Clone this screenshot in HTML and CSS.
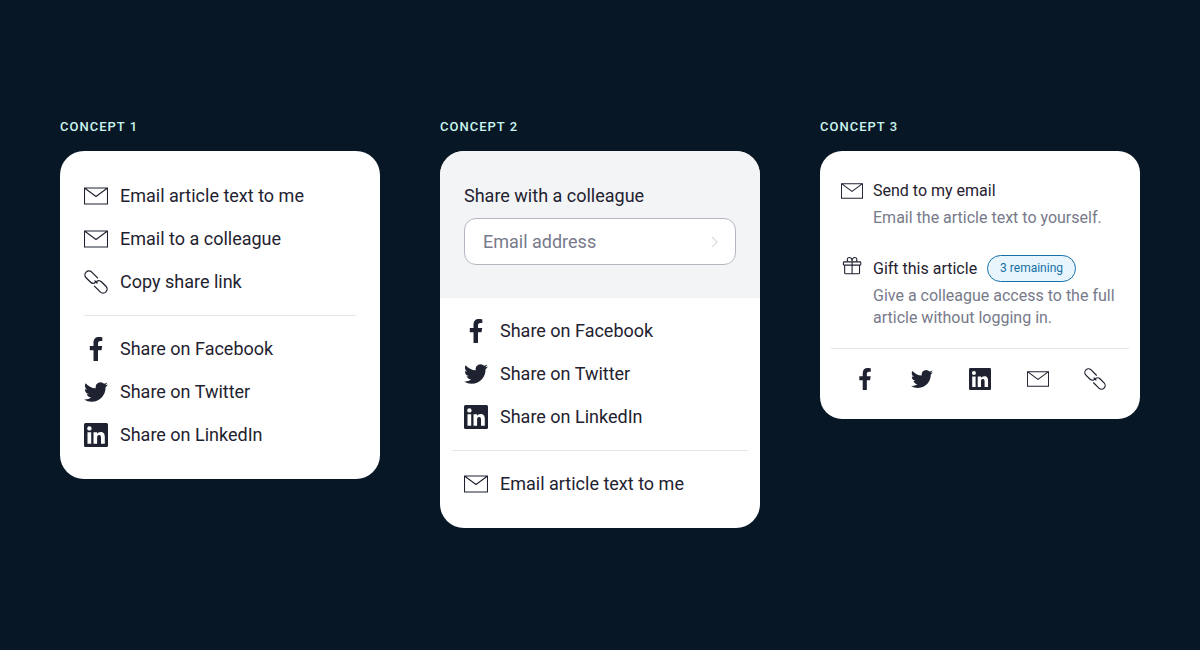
FILE: index.html
```html
<!DOCTYPE html>
<html lang="en">
  <head>
    <meta charset="UTF-8" />
    <meta name="viewport" content="width=device-width, initial-scale=1.0" />
    <title>Share menu concepts</title>
    <link rel="stylesheet" href="styles.css">
  </head>
  <body>
    <!-- Shared icons -->
    <svg class="sprite" aria-hidden="true">
      <symbol id="mail" viewBox="0 0 24 24">
        <path d="M.5 4h23v16H.5zM.5 4L12 12.500 23.500 4" fill="none" stroke="currentColor" stroke-width="1.100" />
      </symbol>
      <symbol id="link" viewBox="0 0 24 24">
        <g transform="translate(12 12) rotate(45)" fill="none" stroke="currentColor" stroke-width="1.300" stroke-linecap="round">
          <path d="M-1.800-4H-10a4 4 0 0 0 0 8H-4A4 4 0 0 0 0 .8" />
          <path d="M1.800 4H10a4 4 0 0 0 0-8H4A4 4 0 0 0 0-.8" />
          <path d="M-1.500 0H1.500" />
        </g>
      </symbol>
      <symbol id="facebook" viewBox="0 0 24 24">
        <path d="M9.500 24V13.300H5.800V9.100h3.700V5.700C9.500 2 11.600 0 15 0c1.600 0 3.300.3 3.300.3v3.700h-1.900c-1.800 0-2.400 1.100-2.400 2.300v2.800h4.200l-.7 4.200H14V24z" fill="currentColor" />
      </symbol>
      <symbol id="twitter" viewBox="0 0 24 24">
        <path d="M23.950 4.570a10 10 0 0 1-2.820.770 4.960 4.960 0 0 0 2.160-2.720c-.950.560-2 .960-3.130 1.180a4.920 4.920 0 0 0-8.380 4.480C7.690 8.090 4.070 6.130 1.640 3.160a4.900 4.900 0 0 0 1.520 6.570 4.900 4.900 0 0 1-2.230-.620v.060a4.920 4.920 0 0 0 3.950 4.830 5 5 0 0 1-2.210.080 4.940 4.940 0 0 0 4.600 3.420A9.870 9.870 0 0 1 0 19.540a14 14 0 0 0 7.550 2.210c9.050 0 14-7.500 14-13.980 0-.210 0-.420-.020-.630a9.940 9.940 0 0 0 2.420-2.570z" fill="currentColor" />
      </symbol>
      <symbol id="linkedin" viewBox="0 0 24 24">
        <rect width="24" height="24" rx="1.500" fill="currentColor" />
        <circle cx="5.400" cy="5.400" r="2.200" fill="#fff" />
        <path d="M3.500 9.200h3.700v11.500H3.500zM9.500 9.200h3.600v1.600c.6-1.100 1.900-1.900 3.600-1.900 3.400 0 4.100 2.300 4.100 5.300v6.500H17v-5.700c0-1.500-.1-3-1.900-3s-2 1.400-2 2.900v5.800H9.500z" fill="#fff" />
      </symbol>
      <symbol id="gift" viewBox="0 0 24 24">
        <g fill="none" stroke="currentColor" stroke-width="1.200" stroke-linejoin="round">
          <rect x="2.600" y="7.500" width="19" height="3.500" rx="1" />
          <path d="M4 11v8.500a1 1 0 0 0 1 1h14.200a1 1 0 0 0 1-1V11M12.100 7.500v13" />
          <path d="M12.100 7C12.100 4 10.800 2.800 9 2.800 6.600 2.800 6.200 5.500 7.800 7.300M12.100 7C12.100 4 13.400 2.800 15.200 2.800 17.600 2.800 18 5.500 16.400 7.300" />
        </g>
      </symbol>
    </svg>

    <main class="concepts">
      <section class="concept">
        <h2>Concept 1</h2>
        <div class="card">
          <div class="list">
            <button class="item"><svg class="icon"><use href="#mail" /></svg>Email article text to me</button>
            <button class="item"><svg class="icon"><use href="#mail" /></svg>Email to a colleague</button>
            <button class="item"><svg class="icon"><use href="#link" /></svg>Copy share link</button>
          </div>
          <hr class="rule" />
          <div class="list">
            <a class="item" href="#"><svg class="icon"><use href="#facebook" /></svg>Share on Facebook</a>
            <a class="item" href="#"><svg class="icon"><use href="#twitter" /></svg>Share on Twitter</a>
            <a class="item" href="#"><svg class="icon"><use href="#linkedin" /></svg>Share on LinkedIn</a>
          </div>
        </div>
      </section>

      <section class="concept">
        <h2>Concept 2</h2>
        <div class="card">
          <form class="colleague">
            <label for="email">Share with a colleague</label>
            <div class="field">
              <input id="email" type="email" placeholder="Email address" />
              <button class="send" type="submit" aria-label="Send">
                <svg viewBox="0 0 8 12"><path d="M1 1l5 5-5 5" fill="none" stroke="currentColor" stroke-width="1.300" /></svg>
              </button>
            </div>
          </form>
          <div class="list">
            <a class="item" href="#"><svg class="icon"><use href="#facebook" /></svg>Share on Facebook</a>
            <a class="item" href="#"><svg class="icon"><use href="#twitter" /></svg>Share on Twitter</a>
            <a class="item" href="#"><svg class="icon"><use href="#linkedin" /></svg>Share on LinkedIn</a>
          </div>
          <hr class="rule wide" />
          <div class="list">
            <button class="item"><svg class="icon"><use href="#mail" /></svg>Email article text to me</button>
          </div>
        </div>
      </section>

      <section class="concept">
        <h2>Concept 3</h2>
        <div class="card compact">
          <button class="action">
            <svg class="icon centered"><use href="#mail" /></svg>
            <span class="title">Send to my email</span>
            <span class="description">Email the article text to yourself.</span>
          </button>
          <button class="action">
            <svg class="icon"><use href="#gift" /></svg>
            <span class="title">Gift this article <span class="badge">3 remaining</span></span>
            <span class="description">Give a colleague access to the full article without logging in.</span>
          </button>
          <hr class="rule wide" />
          <div class="icons">
            <a href="#" aria-label="Facebook"><svg class="icon"><use href="#facebook" /></svg></a>
            <a href="#" aria-label="Twitter"><svg class="icon"><use href="#twitter" /></svg></a>
            <a href="#" aria-label="LinkedIn"><svg class="icon"><use href="#linkedin" /></svg></a>
            <a href="#" aria-label="Email"><svg class="icon"><use href="#mail" /></svg></a>
            <a href="#" aria-label="Copy link"><svg class="icon"><use href="#link" /></svg></a>
          </div>
        </div>
      </section>
    </main>
  </body>
</html>
```
FILE: styles.css
```css
* {
  box-sizing: border-box;
}

body {
  margin: 0;
  background: #081726;
  color: #1f2230;
  font-family: Roboto, sans-serif;
  font-size: 18px;
  line-height: 24px;
}

button,
input {
  font: inherit;
  color: inherit;
  border: 0;
  padding: 0;
  background: none;
  text-align: left;
}

a {
  color: inherit;
  text-decoration: none;
}

.sprite {
  display: none;
}

.concepts {
  display: grid;
  grid-template-columns: repeat(3, 1fr);
  gap: 60px;
  align-items: start;
  padding: 119px 60px 60px;
}

h2 {
  margin: 0 0 16px;
  color: #c9f5ee;
  font-size: 13px;
  font-weight: 500;
  line-height: 16px;
  letter-spacing: 1px;
  text-transform: uppercase;
}

.card {
  overflow: hidden;
  padding: 33px 0 32px;
  border-radius: 24px;
  background: #fff;
}

.list {
  display: flex;
  flex-direction: column;
  gap: 19px;
  padding: 0 24px;
}

.item {
  display: flex;
  align-items: center;
  gap: 12px;
}

.icon {
  flex: none;
  display: block;
  width: 24px;
  height: 24px;
}

.rule {
  height: 1px;
  margin: 21px 24px;
  border: 0;
  background: #e5e6ea;
}

.rule.wide {
  margin: 21px 12px;
}

/* Concept 2 */
.colleague {
  margin: -33px 0 21px;
  padding: 33px 24px;
  background: #f3f4f6;
}

.colleague label {
  display: block;
  margin-bottom: 10px;
}

.field {
  display: flex;
  align-items: center;
  height: 47px;
  padding: 0 16px 0 18px;
  border: 1px solid #b4b6c0;
  border-radius: 12px;
  background: #fff;
}

.field input {
  flex: 1;
  min-width: 0;
  outline: 0;
}

.field input::placeholder {
  color: #777a8a;
  opacity: 1;
}

.send {
  color: #dcdde3;
}

.send svg {
  display: block;
  width: 8px;
  height: 12px;
}

/* Concept 3 */
.compact {
  padding: 27px 0 29px;
  border-radius: 22px;
  font-size: 16px;
}

.compact .icon {
  width: 22px;
  height: 22px;
}

.action {
  display: grid;
  grid-template-columns: 22px 1fr;
  column-gap: 10px;
  row-gap: 3px;
  width: 100%;
  padding: 0 21px;
  line-height: 22px;
}

.action + .action {
  margin-top: 26px;
}

.action .centered {
  align-self: center;
}

.title {
  display: flex;
  align-items: center;
  gap: 10px;
  min-height: 26px;
}

.description {
  grid-column: 2;
  color: #777a8a;
}

.badge {
  padding: 0 12px;
  border: 1px solid #1570a6;
  border-radius: 14px;
  background: #e8f5fd;
  color: #1570a6;
  font-size: 12px;
  line-height: 25px;
}

.compact .rule {
  margin: 19px 11px;
}

.icons {
  display: grid;
  grid-template-columns: repeat(5, 1fr);
  justify-items: center;
  padding: 0 16px;
}
```
